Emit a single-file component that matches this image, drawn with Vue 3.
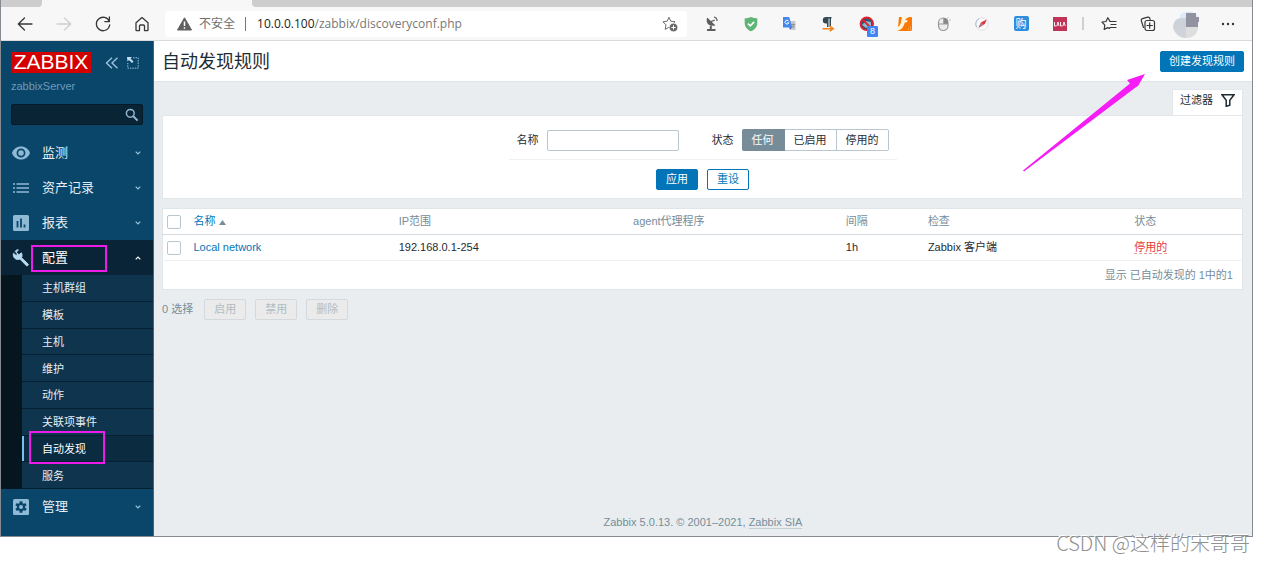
<script setup>
import { ref } from 'vue'

const search = ref('')
const filterName = ref('')
const status = ref('any')
const statuses = [
  { value: 'any', label: '任何' },
  { value: 'enabled', label: '已启用' },
  { value: 'disabled', label: '停用的' },
]
const topMenu = [
  { id: 'eye', label: '监测' },
  { id: 'list', label: '资产记录' },
  { id: 'chart', label: '报表' },
]
const subMenu = [
  { label: '主机群组' },
  { label: '模板' },
  { label: '主机' },
  { label: '维护' },
  { label: '动作' },
  { label: '关联项事件' },
  { label: '自动发现', active: true },
  { label: '服务' },
]
const bulkActions = ['启用', '禁用', '删除']
</script>

<template>
  <div class="page">
    <div class="window">
      <div class="tabs"><span class="tab-edge"></span><span class="tab-active"></span><span class="tab-rest"></span></div>

      <div class="toolbar">
        <div class="nav">
          <button class="tool" aria-label="后退">
            <svg width="18" height="16" viewBox="0 0 18 16" class="line"><path d="M16 8H2.5M8.5 2L2.3 8l6.2 6" /></svg>
          </button>
          <button class="tool faded" aria-label="前进">
            <svg width="18" height="16" viewBox="0 0 18 16" class="line"><path d="M2 8h13.5M9.5 2l6.2 6-6.2 6" /></svg>
          </button>
          <button class="tool" aria-label="刷新">
            <svg width="18" height="18" viewBox="0 0 18 18" class="line"><path d="M15.3 6.500A6.700 6.700 0 1 0 15.700 10M15.400 2v4.600h-4.600" /></svg>
          </button>
          <button class="tool" aria-label="主页">
            <svg width="16" height="16" viewBox="0 0 16 16" class="line"><path d="M2 6.8L8 1.6l6 5.2V14a.6.6 0 0 1-.6.6H10.500V10a1 1 0 0 0-1-1h-3a1 1 0 0 0-1 1v4.600H2.600A.6.6 0 0 1 2 14z" /></svg>
          </button>
        </div>

        <div class="address">
          <svg width="15" height="14" viewBox="0 0 15 14"><path d="M7.500.8L14.500 13H.5z" fill="#606060" stroke="#606060" stroke-linejoin="round" /><path d="M7.500 4.500v4.500M7.500 10.300v1.500" stroke="#fff" stroke-width="1.500" /></svg>
          <span class="unsafe">不安全</span>
          <span class="bar"></span>
          <span class="url"><b>10.0.0.100</b>/zabbix/discoveryconf.php</span>
          <button class="star" aria-label="收藏">
            <svg width="16" height="16" viewBox="0 0 16 16"><path d="M7 1.300l1.800 3.900 4.200.6-3 3 .7 4.600L7 11.200l-3.800 2.200.8-4.500-3-3.100 4.200-.6z" fill="none" stroke="#6a6a6a" stroke-linejoin="round" /><circle cx="11.500" cy="11.500" r="4.300" fill="#666" stroke="#fff" stroke-width=".7" /><path d="M9.300 11.500h4.400M11.500 9.300v4.400" stroke="#fff" /></svg>
          </button>
        </div>

        <div class="extensions">
          <span><svg width="14" height="16" viewBox="0 0 14 16"><path d="M2.200 1.500C.2 6.500 3.500 11 10.500 9.500z" fill="#5f5f5f" /><path d="M5.500 5.800L9.800 4" stroke="#5f5f5f" stroke-width="1.300" /><path d="M9 1.200a3.600 3.600 0 0 1 3 3.800" fill="none" stroke="#5f5f5f" stroke-width="1.200" /><path d="M5.800 9.500v4M2 14h8.500" stroke="#5f5f5f" stroke-width="2" /></svg></span>
          <span><svg width="16" height="16" viewBox="0 0 16 16"><path d="M8 1c2 1 4.200 1.200 6.300 1.300V7c0 4-2.700 6.700-6.300 8.300C4.400 13.700 1.700 11 1.700 7V2.300C3.800 2.200 6 2 8 1z" fill="#5fb573" /><path d="M5 7.600l2.300 2.300 3.900-4" fill="none" stroke="#fff" stroke-width="1.600" /></svg></span>
          <span><svg width="14" height="15" viewBox="0 0 14 15"><path d="M6 5h7.500v9H8.500z" fill="#c5c8cd" /><path d="M1 1h6.200l3 10.500H1z" fill="#4687eb" /><path d="M6.500 5A1.900 1.900 0 1 0 6.800 6.800H5.300" fill="none" stroke="#fff" /><path d="M9 8.500h4M11 7.500v1M12.500 8.500l-3 3.500M10 9.500l2.500 2.500" stroke="#818891" stroke-width=".8" /><path d="M7 11.500h3l-2 2z" fill="#2956b2" /></svg></span>
          <span><svg width="14" height="16" viewBox="0 0 14 16"><path d="M10.500 1H5a3.200 3.200 0 0 0 0 6.400h1V11h1.500V2.600h1V11H10V2.600h.500z" fill="#354954" /><path d="M1.500 12.700h9.500M8.700 10.200l3.500 2.500-3.500 2.500" stroke="#ef8420" stroke-width="1.600" fill="none" /></svg></span>
          <span class="blocked"><svg width="16" height="16" viewBox="0 0 16 16"><circle cx="7.800" cy="7.800" r="6.200" fill="#36536d" /><path d="M3 9l4-4 5 1v4l-5 2z" fill="#8fb8d2" /><circle cx="7.800" cy="7.800" r="6.300" fill="none" stroke="#df202e" stroke-width="1.800" /><path d="M3.500 3.500l8.600 8.600" stroke="#df202e" stroke-width="1.800" /></svg><em>8</em></span>
          <span><svg width="14" height="14" viewBox="0 0 14 14"><path d="M1 0h12a1 1 0 0 1 1 1v11.500a1.500 1.500 0 0 1-1.500 1.500H1a1 1 0 0 1-1-1v-3z" fill="#fb7900" /><path d="M3.800 0h7.700C8.500.7 7.500 2 7.300 3.200h2.600L8.700 5.500H6.700C6 9.500 3.700 12.700 0 13.500V10C2.200 8.700 3 6 3.300 3.500z" fill="#fff5df" /><path d="M10 12h1M12 12h.8M11.800 10h1" stroke="#ffc080" /></svg></span>
          <span><svg width="14" height="16" viewBox="0 0 14 16"><rect x="1.500" y="2" width="9.500" height="12.500" rx="4.700" fill="#ececec" stroke="#999" stroke-width="1.200" /><path d="M6.300 2v6H11V5.500C11 3 9 2 6.300 2z" fill="#888" /><path d="M1.500 8H11" stroke="#999" /><path d="M10.500 2.500l1-1.500M12 4h2" stroke="#bbb" /></svg></span>
          <span><svg width="14" height="14" viewBox="0 0 14 14"><circle cx="7" cy="7" r="6.200" fill="#fafafa" stroke="#dfe1e7" /><path d="M1.500 10A6.200 6.200 0 0 1 4 1.600" fill="none" stroke="#a4b8d2" /><path d="M3.500 10.800L6 5.500 11.800 2.500l-2 4.500z" fill="#df333b" /><path d="M3.500 10.800L6 5.500l3 2z" fill="#b77780" /></svg></span>
          <span><i class="buy">购</i></span>
          <span><svg width="14" height="14" viewBox="0 0 14 14"><rect width="14" height="14" fill="#c23457" /><path d="M1.500 5v4h2M4 9l1-4 1 4M7.500 5v4h2M10 9l1-4 1.200 4" fill="none" stroke="#fff" stroke-width=".9" /></svg></span>
        </div>
        <span class="divider"></span>
        <div class="tools">
          <button class="tool" aria-label="收藏夹">
            <svg width="16" height="16" viewBox="0 0 16 16" class="line thin"><path d="M9 5.400L6.800 1.700 5 5.500l-4 .6 2.800 3-.6 4.400 3.500-1.900 2 .9M9 5.500h6M10 8.500h5M9 11.500h6" /></svg>
          </button>
          <button class="tool" aria-label="集锦">
            <svg width="16" height="16" viewBox="0 0 16 16" class="line thin"><path d="M3.500 11.500L1.300 4.800A1.800 1.800 0 0 1 2.500 2.600l5.300-1.400a1.800 1.800 0 0 1 2.100 1.300l.3 1" /><rect x="5" y="4.500" width="9.500" height="10" rx="2" /><path d="M9.700 6.800v5.400M7 9.500h5.400" /></svg>
          </button>
          <span class="tool">
            <svg width="28" height="28" viewBox="0 0 28 28"><path d="M7 5c4-5 15-5 18 2v6H7z" fill="#dcebf7" /><path d="M0 18c0-6 3-10 9-10h5v10z" fill="#ccd1da" /><path d="M13 3h10v4h3v5h-1v6H13z" fill="#9292a1" /><path d="M0 17h13v11C6 28 1 23 0 17z" fill="#d0d3da" /><path d="M13 17h12c0 6-4 11-12 11z" fill="#dedede" /></svg>
          </span>
          <button class="tool more" aria-label="更多">
            <svg width="14" height="4" viewBox="0 0 14 4" fill="#333"><circle cx="2" cy="2" r="1.200" /><circle cx="7" cy="2" r="1.200" /><circle cx="12" cy="2" r="1.200" /></svg>
          </button>
        </div>
      </div>

      <div class="app">
        <aside class="sidebar">
          <div class="brand">
            <a href="#" class="logo">ZABBIX</a>
            <button class="mini first" aria-label="收起侧栏"><svg width="14" height="12" viewBox="0 0 14 12"><path d="M7 .8L1.500 6 7 11.200M12.500.8L7 6l5.500 5.200" fill="none" stroke="#9ac1dc" stroke-width="1.400" /></svg></button>
            <button class="mini" aria-label="隐藏侧栏"><svg width="12" height="12" viewBox="0 0 12 12"><path d="M6 .8h5.200v10.400H.8V6" fill="none" stroke="#9ac1dc" stroke-dasharray="1.500 1" /><path d="M0 0h5L3.500 1.500 6.500 4.500 5 6 2 3 .500 4.500z" fill="#c4e0f2" /></svg></button>
          </div>
          <div class="server">zabbixServer</div>
          <form class="search" role="search" @submit.prevent>
            <input v-model="search" type="search" aria-label="搜索" />
            <button aria-label="搜索"><svg width="14" height="14" viewBox="0 0 14 14"><circle cx="5.300" cy="5.300" r="3.900" fill="none" stroke="#90b8d1" stroke-width="1.500" /><path d="M8.300 8.300l4.300 4.300" stroke="#90b8d1" stroke-width="2" /></svg></button>
          </form>
          <nav class="menu">
            <a v-for="m in topMenu" :key="m.id" href="#" class="item">
              <svg v-if="m.id === 'eye'" class="icon" width="20" height="14" viewBox="0 0 20 14"><path d="M10 .5c4.300 0 7.600 2.600 9 6.500-1.400 3.900-4.700 6.500-9 6.500S2.400 10.900 1 7C2.400 3.100 5.700.5 10 .5z" fill="#8fbad5" /><circle cx="10" cy="7" r="3.600" fill="none" stroke="#0a466a" stroke-width="1.700" /></svg>
              <svg v-else-if="m.id === 'list'" class="icon" width="20" height="12" viewBox="0 0 20 12"><path d="M2 2h2M2 6h2M2 10h2M5.500 2H18M5.500 6H18M5.500 10H18" stroke="#8fbad5" stroke-width="1.500" /></svg>
              <svg v-else class="icon" width="20" height="16" viewBox="0 0 20 16"><rect x="2" width="16" height="16" rx="1.500" fill="#8fbad5" /><path d="M6.500 6v6.500M10 3.500v9M13.500 9.500v3" stroke="#0a466a" stroke-width="1.800" /></svg>
              <span>{{ m.label }}</span>
              <svg class="chev" width="6" height="4" viewBox="0 0 6 4"><path d="M.7.7L3 3 5.300.7" /></svg>
            </a>
            <a href="#" class="item open">
              <svg class="icon" width="20" height="18" viewBox="0 0 20 18"><path d="M7.400.8L5.300 3.200l2.600 2.600 2.500-2c1 2.200.6 3.900.1 4.900l6.600 6.300c.8.8-.8 2.500-1.700 1.700L8.900 10C5.500 11.800 1.300 8.700 2.500 4.300l2.600 2.200L6.500 5 4.200 2.300C4.800 1.400 6 .7 7.400.8z" fill="#b5d9ef" stroke="#b5d9ef" /></svg>
              <span>配置</span>
              <svg class="chev" width="6" height="4" viewBox="0 0 6 4"><path d="M.7 3.300L3 1l2.300 2.300" /></svg>
              <i class="mark"></i>
            </a>
            <ul class="submenu">
              <li v-for="s in subMenu" :key="s.label" :class="{ active: s.active }">
                <a href="#">{{ s.label }}</a>
                <i v-if="s.active" class="mark"></i>
              </li>
            </ul>
            <a href="#" class="item">
              <svg class="icon" width="20" height="16" viewBox="0 0 20 16"><rect x="2" width="16" height="16" rx="1.500" fill="#8fbad5" /><path d="M10 2.300v11.400M5 5.100l10 5.800M15 5.100l-10 5.800" stroke="#0a466a" stroke-width="2.800" /><circle cx="10" cy="8" r="4.200" fill="#0a466a" /><circle cx="10" cy="8" r="2" fill="#8fbad5" /></svg>
              <span>管理</span>
              <svg class="chev" width="6" height="4" viewBox="0 0 6 4"><path d="M.7.7L3 3 5.300.7" /></svg>
            </a>
          </nav>
        </aside>

        <main class="content">
          <header class="header">
            <h1>自动发现规则</h1>
            <button class="btn create">创建发现规则</button>
          </header>

          <div class="body">
            <div class="filter-tab">
              <a href="#">过滤器
                <svg width="14" height="13" viewBox="0 0 14 13"><path d="M1 .8h12L8.800 6.300v5l-3.600 1V6.300z" fill="none" stroke="#1f2c33" stroke-width="1.500" /></svg>
              </a>
            </div>
            <form class="filter" @submit.prevent>
              <div class="fields">
                <label for="filter-name">名称</label>
                <input id="filter-name" v-model="filterName" type="text" />
                <span id="status-label" class="status-label">状态</span>
                <div class="segments" role="radiogroup" aria-labelledby="status-label">
                  <label v-for="s in statuses" :key="s.value" :class="{ on: status === s.value }">
                    <input v-model="status" type="radio" name="status" :value="s.value" />{{ s.label }}
                  </label>
                </div>
              </div>
              <div class="actions">
                <button class="btn" type="submit">应用</button>
                <button class="btn alt" type="reset">重设</button>
              </div>
            </form>

            <table>
              <colgroup>
                <col class="c-check" /><col class="c-name" /><col class="c-ip" /><col class="c-agent" /><col class="c-int" /><col class="c-checks" /><col />
              </colgroup>
              <thead>
                <tr>
                  <th><input type="checkbox" aria-label="全选" /></th>
                  <th><a href="#">名称<svg width="7" height="5" viewBox="0 0 7 5"><path d="M3.500 0L7 5H0z" fill="#768d99" /></svg></a></th>
                  <th>IP范围</th><th>agent代理程序</th><th>间隔</th><th>检查</th><th>状态</th>
                </tr>
              </thead>
              <tbody>
                <tr>
                  <td><input type="checkbox" aria-label="Local network" /></td>
                  <td><a href="#">Local network</a></td>
                  <td>192.168.0.1-254</td><td></td><td>1h</td><td>Zabbix 客户端</td>
                  <td><a href="#" class="off">停用的</a></td>
                </tr>
              </tbody>
              <tfoot>
                <tr><td colspan="7">显示 已自动发现的 1中的1</td></tr>
              </tfoot>
            </table>

            <div class="bulk">
              <span>0 选择</span>
              <button v-for="b in bulkActions" :key="b" class="btn" disabled>{{ b }}</button>
            </div>
          </div>

          <footer>Zabbix 5.0.13. © 2001–2021, <a href="#">Zabbix SIA</a></footer>
        </main>
      </div>
    </div>

    <svg class="arrow" width="122" height="98" viewBox="0 0 122 98"><path d="M0 96.500L107 9.500 104 6 122 0 115 12 112.500 13.500 1 97.500z" fill="#f51cf5" /></svg>
    <div class="watermark">CSDN @这样的宋哥哥</div>
  </div>
</template>

<style>
body {
  background: #fff;
}
</style>

<style scoped>
* {
  box-sizing: border-box;
}
.page {
  position: relative;
  display: flex;
  flex-direction: column;
  min-height: 100vh;
  padding: 0 11px 25px 0;
  font: 11px/13px "Liberation Sans", "Noto Sans CJK SC", sans-serif;
  color: #1f2c33;
}
button,
input {
  font: inherit;
  margin: 0;
}
button {
  padding: 0;
  border: 0;
  background: none;
}
a {
  color: #0275b8;
  text-decoration: none;
}
svg {
  flex: none;
}
.window {
  flex: 1;
  display: flex;
  flex-direction: column;
  border: 1px solid #858b90;
  border-top: 0;
}
.tabs {
  display: flex;
  height: 7px;
  background: #f7f7f7;
}
.tab-edge {
  width: 41px;
  background: #cdcdcd;
  border-bottom-right-radius: 4px;
}
.tab-active {
  width: 210px;
}
.tab-rest {
  flex: 1;
  background: #cdcdcd;
  border-bottom-left-radius: 4px;
}
.toolbar {
  display: flex;
  align-items: center;
  height: 34px;
  padding: 0 5px 0 4px;
  background: #f7f7f7;
  border-bottom: 1px solid #dadada;
}
.nav,
.tools {
  display: flex;
}
.tool {
  display: flex;
  align-items: center;
  justify-content: center;
  width: 39px;
  height: 32px;
}
.line {
  fill: none;
  stroke: #383838;
  stroke-width: 1.3;
  stroke-linecap: round;
  stroke-linejoin: round;
}
.thin {
  stroke-width: 1.2;
}
.faded .line {
  stroke: #cfcfcf;
}
.more {
  margin-left: 2px;
}
.address {
  flex: 1;
  display: flex;
  align-items: center;
  height: 26px;
  margin: 0 6px 0 4px;
  padding: 0 9px 0 12px;
  border-radius: 4px;
  background: #fff;
  font-size: 12px;
  white-space: nowrap;
}
.unsafe {
  margin-left: 7px;
  padding-top: 1px;
  color: #6e6e6e;
}
.bar {
  width: 1px;
  height: 14px;
  margin: 0 11px 0 10px;
  background: #777;
}
.url {
  font-family: "Open Sans", sans-serif;
  color: #777;
}
.url b {
  font-weight: 400;
  color: #222;
}
.star {
  display: flex;
  margin-left: auto;
}
.extensions {
  display: grid;
  grid-template-columns: repeat(10, 1fr);
  width: 386px;
}
.extensions span {
  position: relative;
  display: flex;
  align-items: center;
  justify-content: center;
}
.blocked em {
  position: absolute;
  right: 8px;
  bottom: -5px;
  width: 11px;
  height: 11px;
  border-radius: 1px;
  background: #4285f4;
  color: #fff;
  font: 9px/11px "Liberation Sans", sans-serif;
  text-align: center;
}
.buy {
  width: 15px;
  height: 15px;
  border-radius: 2px;
  background: #2e8ddf;
  color: #fff;
  font: 11px/14px "Noto Sans CJK SC", sans-serif;
  text-align: center;
}
.divider {
  width: 2px;
  height: 13px;
  margin: 0 5px 0 3px;
  background: #cfcfcf;
}
.app {
  flex: 1;
  display: flex;
}
.sidebar {
  flex: none;
  width: 153px;
  border-right: 1px solid #39698a;
  background: #0a466a;
}
.brand {
  display: flex;
  align-items: center;
  margin: 11px 0 0 10px;
}
.logo {
  width: 80px;
  height: 21px;
  background: #d40000;
  color: #fff;
  font-size: 21px;
  line-height: 20px;
  text-align: center;
}
.mini {
  display: flex;
  margin-left: 8px;
}
.first {
  margin-left: 14px;
}
.server {
  margin: 7px 10px 11px;
  color: #6e9ab8;
}
.search {
  display: flex;
  align-items: center;
  height: 21px;
  margin: 0 10px 10px;
  padding-right: 3px;
  border: 1px solid #061b29;
  border-radius: 2px;
  background: #082435;
}
.search input {
  flex: 1;
  min-width: 0;
  border: 0;
  background: none;
  color: #fff;
  outline: 0;
}
.search button {
  display: flex;
}
.item {
  position: relative;
  display: flex;
  align-items: center;
  height: 35px;
  padding: 0 12px 0 10px;
  color: #e3edf3;
  font-size: 13px;
}
.item span {
  flex: 1;
  margin-left: 11px;
}
.chev path {
  fill: none;
  stroke: #9ac1d8;
  stroke-width: 1.2;
}
.open {
  background: #092436;
  color: #fff;
}
.open .chev path {
  stroke: #fff;
}
.mark {
  position: absolute;
  z-index: 1;
  border: 2px solid #ed1bea;
  pointer-events: none;
}
.item .mark {
  left: 30px;
  top: 5px;
  width: 76px;
  height: 27px;
}
.submenu {
  display: grid;
  grid-auto-rows: 1fr;
  height: 214px;
  margin: 0;
  padding: 0 0 0 21px;
  list-style: none;
  background: #05161f;
}
.submenu li {
  position: relative;
  background: #0f344e;
  border-bottom: 1px solid #072031;
}
.submenu a {
  display: flex;
  align-items: center;
  height: 100%;
  padding: 2px 0 0 20px;
  color: #e6eef3;
}
.submenu .active {
  background: #0a2b40;
}
.submenu .active a {
  padding-left: 18px;
  border-left: 2px solid #78c0ed;
  color: #fff;
}
.submenu .mark {
  left: 7px;
  top: -5px;
  width: 76px;
  height: 33px;
}
.content {
  flex: 1;
  display: flex;
  flex-direction: column;
  min-width: 0;
  background: #e9edf0;
}
.header {
  display: flex;
  align-items: center;
  justify-content: space-between;
  height: 41px;
  padding: 0 8px;
  background: #fff;
  border-bottom: 1px solid #dfe4e7;
}
h1 {
  margin: 0;
  padding-top: 1px;
  font-size: 18px;
  line-height: 24px;
  font-weight: 400;
}
.btn {
  min-width: 42px;
  height: 21px;
  padding: 0 8px;
  border: 1px solid #0275b8;
  border-radius: 2px;
  background: #0275b8;
  color: #fff;
  line-height: 19px;
}
.alt {
  background: #fff;
  color: #0275b8;
}
.btn:disabled {
  border-color: #d3d9dc;
  background: #ebebeb;
  color: #b1bcc2;
}
.body {
  padding: 7px 9px 0 8px;
}
.filter-tab {
  display: flex;
  justify-content: flex-end;
}
.filter-tab a {
  display: flex;
  align-items: center;
  gap: 8px;
  height: 26px;
  padding: 0 7px 4px;
  border: 1px solid #e2e7ea;
  border-bottom: 0;
  background: #fff;
  color: #1f2c33;
}
.filter {
  padding: 13px 0 8px;
  border: 1px solid #e2e7ea;
  background: #fff;
}
.fields {
  display: flex;
  align-items: center;
  width: 388px;
  margin: 0 auto;
  padding: 0 8px 8px;
  border-bottom: 1px solid #edf0f2;
}
.fields > input {
  width: 132px;
  height: 21px;
  margin-left: 8px;
  padding: 0 4px;
  border: 1px solid #b9c6cd;
  border-radius: 2px;
}
.status-label {
  margin: 0 8px 0 auto;
}
.segments {
  display: flex;
}
.segments label {
  height: 22px;
  padding: 0 9px;
  border: 1px solid #b9c6cd;
  border-left-width: 0;
  line-height: 20px;
}
.segments label:first-child {
  border-radius: 2px 0 0 2px;
}
.segments label:last-child {
  border-radius: 0 2px 2px 0;
}
.segments .on {
  padding: 0 10px;
  border-color: #768d99;
  background: #768d99;
  color: #fff;
}
.segments input {
  position: absolute;
  opacity: 0;
  width: 1px;
  height: 1px;
}
.actions {
  display: flex;
  justify-content: center;
  gap: 9px;
  margin-top: 9px;
}
table {
  width: 100%;
  margin-top: 9px;
  table-layout: fixed;
  border-collapse: collapse;
  border: 1px solid #e0e5e8;
  background: #fff;
}
.c-check {
  width: 26px;
}
.c-name {
  width: 19%;
}
.c-ip {
  width: 21.7%;
}
.c-agent {
  width: 19.7%;
}
.c-int {
  width: 7.6%;
}
.c-checks {
  width: 19.1%;
}
th,
td {
  height: 26px;
  padding: 0 5px;
  text-align: left;
  font-weight: 400;
  white-space: nowrap;
}
th:first-child,
td:first-child {
  padding-left: 4px;
}
th {
  color: #768d99;
  border-bottom: 1px solid #d3dce1;
}
tbody td {
  border-bottom: 1px solid #edf0f2;
}
th svg {
  margin-left: 3px;
}
table input {
  display: block;
  appearance: none;
  width: 14px;
  height: 14px;
  border: 1px solid #b9c6cd;
  border-radius: 2px;
  background: #fff;
}
.off {
  color: #e33734;
  border-bottom: 1px dashed #eb9a98;
}
tfoot td {
  height: 29px;
  padding: 0 9px;
  text-align: right;
  color: #768d99;
}
.bulk {
  display: flex;
  align-items: center;
  gap: 9px;
  margin-top: 9px;
  color: #768d99;
}
.bulk span {
  margin-right: 2px;
}
footer {
  margin-top: auto;
  padding-bottom: 7px;
  text-align: center;
  color: #768d99;
}
footer a {
  color: inherit;
  border-bottom: 1px solid #c3ccd1;
}
.arrow {
  position: absolute;
  top: 74px;
  right: 119px;
  pointer-events: none;
}
.watermark {
  position: absolute;
  right: 14px;
  bottom: 4px;
  color: #909090;
  font: 300 20px/30px "Noto Sans CJK SC", sans-serif;
  text-shadow: -1px -1px 0 #fff;
}
</style>
